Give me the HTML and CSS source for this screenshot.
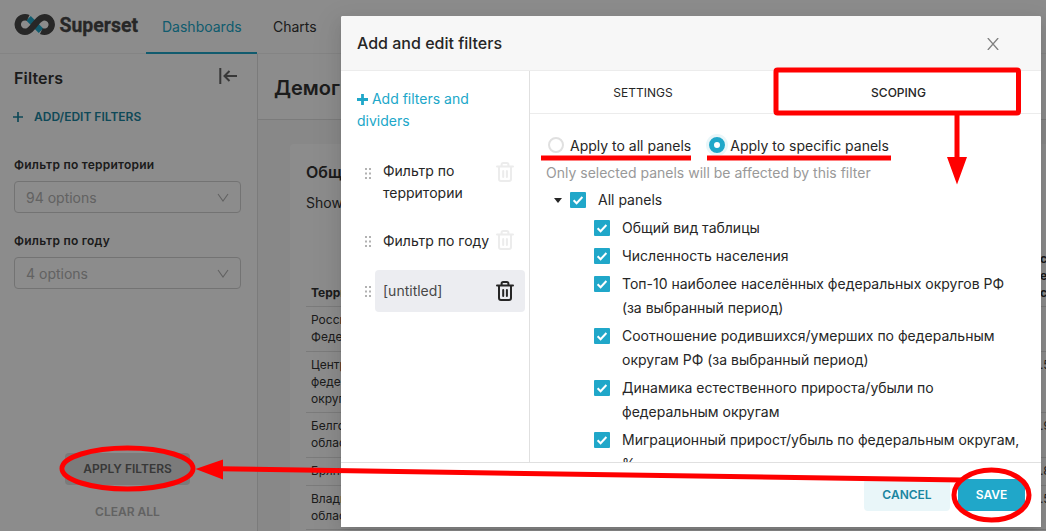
FILE: index.html
```html
<!DOCTYPE html>
<html lang="ru">
<head>
<meta charset="utf-8">
<title>Superset</title>
<link rel="stylesheet" href="styles.css">
</head>
<body>
<svg class="defs" width="0" height="0">
  <symbol id="trash" viewBox="0 0 18 20"><path d="M1 4.6h16M5.6 4.2V2.6Q5.6 1 7.2 1h3.6q1.6 0 1.6 1.6v1.6M3 5v12q0 2 2 2h8q2 0 2-2V5M7.2 9v6M10.9 9v6" fill="none" stroke="currentColor" stroke-width="2" stroke-linecap="round"/></symbol>
  <symbol id="drag" viewBox="0 0 6 11"><path d="M0 0h2v2H0zM4 0h2v2H4zM0 4.5h2v2H0zM4 4.5h2v2H4zM0 9h2v2H0zM4 9h2v2H4z" fill="currentColor"/></symbol>
  <symbol id="check" viewBox="0 0 16 16"><path d="M3.6 8.2l3 3 5.8-6.2" fill="none" stroke="#fff" stroke-width="2"/></symbol>
  <symbol id="chevron" viewBox="0 0 12 10"><path d="M1 1l5 7 5-7" fill="none" stroke="currentColor" stroke-width="1.1"/></symbol>
</svg>
<div class="app">
  <header class="navbar">
    <svg class="logo" width="126" height="28" viewBox="0 0 126 28">
      <g fill="none" stroke-width="6.4">
        <path d="M14.500 6.200L27 18.800" stroke="#20a7c9"/>
        <path d="M14.200 5.900A7.300 7.300 0 1 0 11 19.800C16 19.800 17.500 16 20.750 12.500S25.500 5.200 30.500 5.200A7.300 7.300 0 1 1 27.300 19.100" stroke="#484848"/>
      </g>
      <text x="45.500" y="20" textLength="78.500" lengthAdjust="spacingAndGlyphs" class="wordmark">Superset</text>
    </svg>
    <nav class="nav"><a class="nav-link current">Dashboards</a><a class="nav-link">Charts</a></nav>
  </header>
  <div class="content">
    <aside class="sidebar">
      <div class="side-head"><h2>Filters</h2>
        <svg class="collapse" width="18" height="16" viewBox="0 0 18 16"><path d="M1.300 0v16M5.500 8H18M10.500 3L5.500 8l5 5" fill="none" stroke="#666" stroke-width="2"/></svg>
      </div>
      <a class="edit-link"><svg width="10" height="10" viewBox="0 0 10 10"><path d="M5 0v10M0 5h10" stroke="currentColor" stroke-width="1.700"/></svg>Add/edit filters</a>
      <div class="field"><label>Фильтр по территории</label><div class="select">94 options<svg width="12" height="10"><use href="#chevron"/></svg></div></div>
      <div class="field"><label>Фильтр по году</label><div class="select">4 options<svg width="12" height="10"><use href="#chevron"/></svg></div></div>
      <div class="side-actions"><button class="apply">Apply filters</button><button class="clear">Clear all</button></div>
    </aside>
    <main class="board">
      <div class="board-head"><h1>Демография</h1></div>
      <section class="card">
        <h3>Общий вид таблицы</h3>
        <p>Show entries</p>
        <table>
          <thead><tr><th>Территория</th><th>сред<br>е<br>с</th></tr></thead>
          <tbody>
            <tr><td>Российская<br>Федерация</td><td></td></tr>
            <tr><td>Центральный<br>федеральный<br>округ</td><td>.5</td></tr>
            <tr><td>Белгородская<br>область</td><td>.9</td></tr>
            <tr><td>Брянская</td><td>.8</td></tr>
            <tr><td>Владимирская<br>область</td><td>.5</td></tr>
          </tbody>
        </table>
      </section>
    </main>
  </div>
</div>
<div class="mask"></div>
<div class="modal">
  <header class="modal-head"><span>Add and edit filters</span>
    <svg width="12" height="12" viewBox="0 0 12 12"><path d="M.8 0l10.400 12M11.200 0L.8 12" stroke="#808080" stroke-width="1.300"/></svg>
  </header>
  <div class="modal-body">
    <div class="filter-list">
      <a class="add"><svg width="11" height="11" viewBox="0 0 11 11"><path d="M5.500 0v11M0 5.500h11" stroke="currentColor" stroke-width="2.800"/></svg> Add filters and dividers</a>
      <div class="filter"><svg class="drag" width="6" height="11"><use href="#drag"/></svg><div class="filter-box"><span>Фильтр по территории</span><svg class="trash" width="18" height="20"><use href="#trash"/></svg></div></div>
      <div class="filter"><svg class="drag" width="6" height="11"><use href="#drag"/></svg><div class="filter-box"><span>Фильтр по году</span><svg class="trash" width="18" height="20"><use href="#trash"/></svg></div></div>
      <div class="filter active"><svg class="drag" width="6" height="11"><use href="#drag"/></svg><div class="filter-box"><span>[untitled]</span><svg class="trash" width="18" height="20"><use href="#trash"/></svg></div></div>
    </div>
    <div class="config">
      <div class="tabs"><div class="tab">Settings</div><div class="tab selected">Scoping</div></div>
      <div class="radios">
        <label class="radio"><i></i>Apply to all panels</label>
        <label class="radio on"><i></i>Apply to specific panels</label>
      </div>
      <p class="hint">Only selected panels will be affected by this filter</p>
      <div class="tree">
        <div class="node root"><i class="caret"></i><svg class="box"><use href="#check"/></svg><span>All panels</span></div>
        <div class="node"><svg class="box"><use href="#check"/></svg><span>Общий вид таблицы</span></div>
        <div class="node"><svg class="box"><use href="#check"/></svg><span>Численность населения</span></div>
        <div class="node"><svg class="box"><use href="#check"/></svg><span>Топ-10 наиболее населённых федеральных округов РФ<br>(за выбранный период)</span></div>
        <div class="node"><svg class="box"><use href="#check"/></svg><span>Соотношение родившихся/умерших по федеральным<br>округам РФ (за выбранный период)</span></div>
        <div class="node"><svg class="box"><use href="#check"/></svg><span>Динамика естественного прироста/убыли по<br>федеральным округам</span></div>
        <div class="node"><svg class="box"><use href="#check"/></svg><span>Миграционный прирост/убыль по федеральным округам,<br>%</span></div>
      </div>
    </div>
  </div>
  <footer class="modal-foot"><button class="cancel">Cancel</button><button class="save">Save</button></footer>
</div>
<svg class="marks" width="1046" height="531" viewBox="0 0 1046 531">
  <g fill="none" stroke="#f00" stroke-width="5">
    <rect x="776" y="70" width="242.500" height="43" rx="1.500"/>
    <path d="M957 114v45M541 158h150M707 158h184M220 468.800L962 480"/>
    <ellipse cx="127.500" cy="468.500" rx="65.500" ry="20.500"/>
    <ellipse cx="991.500" cy="495" rx="37.500" ry="25"/>
  </g>
  <path d="M947 157h20l-10 27.500zM195.500 469l27.500-9.500v20z" fill="#f00"/>
</svg>
</body>
</html>
```
FILE: styles.css
```css
* { box-sizing: border-box; }
body { margin: 0; width: 1046px; height: 531px; overflow: hidden; position: relative; font: 14px/22px Inter, "Noto Sans", sans-serif; color: #333; background: #fff; }
h1, h2, h3, p { margin: 0; }
button { border: 0; padding: 0; border-radius: 4px; height: 32px; font: 600 12px/32px Inter, sans-serif; text-transform: uppercase; }
svg { flex: none; }
.defs { position: absolute; }

.app { display: flex; flex-direction: column; width: 1046px; height: 531px; overflow: hidden; }
.navbar { display: flex; flex: none; height: 54px; padding-left: 14px; border-bottom: 1px solid #f0f0f0; }
.logo { margin-top: 12px; }
.wordmark { font: 700 21px Roboto, sans-serif; fill: #484848; stroke: #484848; stroke-width: .3px; }
.nav { display: flex; margin-left: 6px; }
.nav-link { height: 54px; padding: 0 16px; line-height: 54px; color: #333; }
.nav-link.current { width: 111px; color: #20a7c9; border-bottom: 2px solid #20a7c9; }

.content { display: flex; flex: 1; min-height: 0; }
.sidebar { display: flex; flex-direction: column; flex: none; width: 258px; padding: 12px 16px 0 14px; border-right: 1px solid #e0e0e0; }
.side-head { display: flex; justify-content: space-between; height: 24px; padding-right: 4px; }
.side-head h2 { font: 600 16px/24px Inter, sans-serif; letter-spacing: .15px; }
.collapse { margin-top: 2px; }
.edit-link { display: flex; align-items: center; gap: 11px; height: 20px; margin: 17px 0 38px -1px; font: 600 12px/20px Inter, sans-serif; text-transform: uppercase; color: #1a85a0; }
.field { height: 76px; }
.field label { display: block; height: 16px; margin-top: -8px; margin-bottom: 8px; font: 600 12px/16px Inter, sans-serif; letter-spacing: .24px; }
.select { display: flex; align-items: center; justify-content: space-between; width: 227px; height: 32px; padding: 1px 11px 0; border: 1px solid #d2d2d2; border-radius: 4px; color: #b2b2b2; }
.side-actions { display: flex; flex-direction: column; align-items: center; gap: 11px; margin-top: 136px; }
.apply { width: 125px; background: #e0e0e0; color: #666; }
.clear { background: none; color: #b2b2b2; }

.board { flex: none; width: 900px; background: #f7f7f7; }
.board-head { height: 66px; padding: 20px 16px; background: #fff; border-bottom: 1px solid #e0e0e0; }
.board-head h1 { font: 600 20px/28px Inter, sans-serif; }
.card { margin: 24px 0 0 32px; height: 420px; padding: 16px; background: #fff; border-radius: 4px; }
.card h3 { font: 600 16px/24px Inter, sans-serif; }
.card p { margin-top: 8px; }
table { width: 850px; margin-top: 37px; border-collapse: collapse; table-layout: fixed; font-size: 12px; line-height: 16.8px; }
th, td { padding: 5px 5px; border-bottom: 1px solid #e0e0e0; text-align: left; vertical-align: top; }
th:first-child { width: 729px; vertical-align: bottom; }
th { padding: 0 5px 5px; font-weight: 700; }

.mask { position: absolute; inset: 0; background: rgba(0,0,0,.45); }

.modal { position: absolute; left: 341px; top: 16px; width: 700px; height: 511px; display: flex; flex-direction: column; background: #fff; border-radius: 2px; box-shadow: 0 3px 6px -4px rgba(0,0,0,.12), 0 6px 16px rgba(0,0,0,.08), 0 9px 28px 8px rgba(0,0,0,.05); color: #262626; overflow: visible; }
.modal-head { display: flex; align-items: center; justify-content: space-between; flex: none; height: 55px; padding: 0 42px 0 16px; background: #f7f7f7; border-bottom: 1px solid #ececec; border-radius: 2px 2px 0 0; font-size: 16px; font-weight: 500; }
.modal-head svg { margin-top: 1px; }
.modal-body { display: flex; height: 391px; overflow: hidden; }
.filter-list { flex: none; width: 189px; padding: 17px 4px 0 16px; border-right: 1px solid #e0e0e0; }
.add { display: block; width: 130px; height: 44px; margin-bottom: 18px; color: #20a7c9; }
.add svg { vertical-align: -1px; }
.filter { display: flex; align-items: center; margin-bottom: 6px; padding-left: 8px; }
.filter:nth-of-type(2) { margin-bottom: 8px; }
.filter:nth-of-type(1) .drag { align-self: flex-start; margin-top: 18px; }
.drag { color: #b2b2b2; margin-top: 1px; }
.filter-box { display: flex; align-items: flex-start; justify-content: space-between; width: 150px; margin-left: 4px; padding: 10px 11px 10px 8px; border-radius: 4px; white-space: nowrap; }
.filter:nth-of-type(1) span { width: 90px; white-space: normal; }
.trash { color: #ececec; margin: 1px 0 0; }
.filter:nth-of-type(1) .trash { margin-top: 2px; }
.filter:nth-of-type(2) .trash { margin-top: 0; }
.active .filter-box { background: #ecedf1; color: #484848; }
.active .trash { color: #262626; }
.config { flex: 1; min-width: 0; }
.tabs { display: grid; grid-template-columns: 226px 1fr; height: 43px; border-bottom: 1px solid #ececec; }
.tab { text-align: center; line-height: 43px; font-size: 12px; text-transform: uppercase; }
.selected { font-weight: 500; }
.radios { display: flex; gap: 18px; height: 22px; margin: 21px 0 0 18px; white-space: nowrap; }
.radio { display: flex; align-items: center; gap: 6px; }
.radio i { width: 16px; height: 16px; margin-top: -2px; border: 2px solid #e0e0e0; border-radius: 50%; }
.radio.on { gap: 5px; }
.radio.on i { border: 5px solid #20a7c9; box-shadow: 0 0 0 3px #e9f6f9; }
.hint { margin: 5px 0 4px 16px; color: #999; white-space: nowrap; }
.tree { padding-left: 64px; line-height: 24px; white-space: nowrap; }
.node { display: flex; align-items: flex-start; margin-bottom: 4px; }
.root { margin-left: -40px; }
.caret { width: 8px; margin: 10px 8px 0 0; border: 4px solid transparent; border-top: 5px solid #262626; border-bottom: 0; }
.box { width: 16px; height: 16px; margin: 4px 12px 0 0; background: #20a7c9; border-radius: 1px; }
.modal-foot { display: flex; justify-content: flex-end; gap: 8px; flex: none; height: 65px; padding: 16px 16px 0; border-top: 1px solid #e0e0e0; background: #fff; }
.cancel { width: 86px; background: #e9f6f9; color: #1a85a0; }
.save { width: 67px; background: #20a7c9; color: #fff; }
.marks { position: absolute; left: 0; top: 0; }
```
